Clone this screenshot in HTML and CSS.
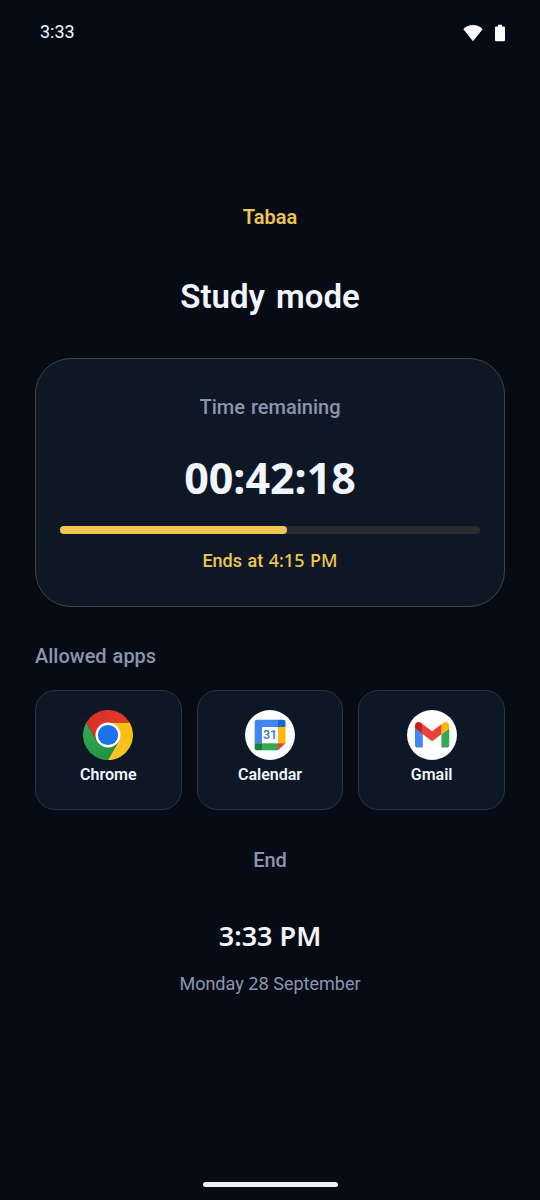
FILE: index.html
```html
<!DOCTYPE html>
<html lang="en">
<head>
<meta charset="utf-8">
<title>Tabaa</title>
<link rel="stylesheet" href="styles.css">
</head>
<body>
<div class="screen">
  <header class="status">
    <span class="clock">3:33</span>
    <div class="status-icons">
      <svg width="20" height="18" viewBox="0 0 20 18"><path fill="#fff" d="M.4 5.2C3 2.400 6.200 1 10 1s7 1.400 9.600 4.200L10 17.200z"/></svg>
      <svg width="10" height="18" viewBox="0 0 10 18"><path fill="#fff" d="M3 .8h4v1.700h1.800c.7 0 1.200.5 1.200 1.200v12.400c0 .7-.5 1.200-1.200 1.200H1.200C.5 17.300 0 16.800 0 16.100V3.700c0-.7.5-1.200 1.200-1.200H3z"/></svg>
    </div>
  </header>

  <main class="content">
    <div class="brand">Tabaa</div>
    <h1 class="title">Study mode</h1>

    <section class="timer-card">
      <div class="label timer-label">Time remaining</div>
      <div class="timer">00:42:18</div>
      <div class="track"><div class="fill"></div></div>
      <div class="ends">Ends at <span class="num">4:15 PM</span></div>
    </section>

    <h2 class="label apps-label">Allowed apps</h2>
    <section class="apps">
      <div class="app">
        <svg class="app-icon" viewBox="0 0 48 48">
          <defs>
            <linearGradient id="red" x1="0" x2="1"><stop offset="0" stop-color="#d93025"/><stop offset="1" stop-color="#e33b2e"/></linearGradient>
            <linearGradient id="green" x1="0" y1="0" x2="1" y2="1"><stop offset="0" stop-color="#34a853"/><stop offset="1" stop-color="#1e8e3e"/></linearGradient>
            <linearGradient id="yellow" x1="0" y1="1" x2="1" y2="0"><stop offset="0" stop-color="#fcc934"/><stop offset="1" stop-color="#fbbc04"/></linearGradient>
          </defs>
          <path fill="url(#green)" d="M3.200 12A24 24 0 0 0 24 48L34.400 30 24 24 13.600 30z"/>
          <path fill="url(#yellow)" d="M24 12H44.800A24 24 0 0 1 24 48L34.400 30z"/>
          <path fill="url(#red)" d="M3.200 12A24 24 0 0 1 44.800 12H24V24L13.600 30z"/>
          <circle cx="24" cy="24" r="12" fill="#fff"/>
          <circle cx="24" cy="24" r="9.700" fill="#1a73e8"/>
        </svg>
        <span class="app-name">Chrome</span>
      </div>
      <div class="app">
        <svg class="app-icon" viewBox="0 0 50 50">
          <circle cx="25" cy="25" r="25" fill="#fff"/>
          <path fill="#4285f4" d="M11.800 9.700H33V17H17V33.300H9.700V11.800q0-2.100 2.100-2.100z"/>
          <path fill="#1967d2" d="M33 9.700h5.400q2.100 0 2.100 2.100V17H33z"/>
          <path fill="#fbbc04" d="M33 17h7.500v16.300H33z"/>
          <path fill="#34a853" d="M17 33.300h16v7H17z"/>
          <path fill="#188038" d="M9.700 33.300H17v7h-5.200q-2.100 0-2.100-2.100z"/>
          <path fill="#ea4335" d="M33 33.300h7.500l-7.500 7z"/>
          <text x="25" y="29.300" text-anchor="middle" class="cal-day">31</text>
        </svg>
        <span class="app-name">Calendar</span>
      </div>
      <div class="app">
        <svg class="app-icon" viewBox="0 0 50 50">
          <circle cx="25" cy="25" r="25" fill="#fff"/>
          <g transform="translate(8 11.900) scale(.389) translate(-52 -42)">
            <path fill="#4285f4" d="M58 108h14V74L52 59v43c0 3.320 2.690 6 6 6"/>
            <path fill="#34a853" d="M120 108h14c3.320 0 6-2.690 6-6V59l-20 15"/>
            <path fill="#fbbc04" d="M120 48v26l20-15v-8c0-7.420-8.470-11.650-14.400-7.200"/>
            <path fill="#ea4335" d="M72 74V48l24 18 24-18v26L96 92"/>
            <path fill="#c5221f" d="M52 51v8l20 15V48l-5.600-4.200c-5.940-4.450-14.400-.22-14.400 7.200"/>
          </g>
        </svg>
        <span class="app-name">Gmail</span>
      </div>
    </section>

    <div class="label end-label">End</div>
    <div class="now">3:33 PM</div>
    <div class="date">Monday <span class="num">28</span> September</div>
  </main>
  <div class="home-bar"></div>
</div>
</body>
</html>
```
FILE: styles.css
```css
* { box-sizing: border-box; }
body { margin: 0; background: #060b16; }
.screen {
  width: 540px;
  height: 1200px;
  display: flex;
  flex-direction: column;
  background: #060b16;
  color: #f1f5fd;
  font-family: Roboto, "Noto Sans", sans-serif;
}
.status {
  height: 64px;
  padding: 0 35px 0 40px;
  display: flex;
  align-items: center;
  justify-content: space-between;
}
.clock { font-size: 18px; line-height: 24px; }
.status-icons { display: flex; gap: 12px; padding-top: 1px; }
.status-icons svg { display: block; }
.content {
  flex: 1;
  padding: 141px 35px 0;
  text-align: center;
}
.brand {
  font-size: 20px;
  line-height: 24px;
  font-weight: 600;
  color: #efc650;
}
.title {
  margin: 48px 0 0;
  font-size: 33px;
  line-height: 40px;
  font-weight: 600;
  word-spacing: 3px;
}
.label {
  margin: 0;
  font-size: 20px;
  line-height: 24px;
  font-weight: 500;
  color: #8b96ae;
  word-spacing: 1px;
}
.timer-card {
  margin-top: 41px;
  height: 249px;
  padding: 36px 24px 0;
  border: 1px solid #46443a;
  border-radius: 36px;
  background: #0e1726;
}
.timer {
  margin-top: 31px;
  font-family: "Noto Sans", sans-serif;
  font-size: 43px;
  line-height: 56px;
  font-weight: 700;
}
.track {
  margin-top: 20px;
  height: 8px;
  border-radius: 4px;
  background: #292b2c;
}
.fill {
  width: 54%;
  height: 8px;
  border-radius: 4px;
  background: #efc650;
}
.ends {
  margin-top: 15px;
  font-size: 18px;
  line-height: 24px;
  font-weight: 500;
  color: #efc650;
  word-spacing: 1px;
}
.num { font-family: "Noto Sans", sans-serif; line-height: 1; }
.apps-label { margin-top: 37px; text-align: left; }
.apps {
  margin-top: 22px;
  display: grid;
  grid-template-columns: repeat(3, 1fr);
  gap: 15px;
}
.app {
  height: 120px;
  padding-top: 19px;
  display: flex;
  flex-direction: column;
  align-items: center;
  border: 1px solid #2c3442;
  border-radius: 20px;
  background: #0e1726;
}
.app-icon { display: block; width: 50px; height: 50px; flex: none; }
.cal-day { font: 500 12.500px Roboto, sans-serif; fill: #3474dc; }
.app-name {
  margin-top: 5px;
  font-size: 16px;
  line-height: 20px;
  font-weight: 600;
}
.end-label { margin-top: 38px; }
.now {
  margin-top: 46px;
  font-family: "Noto Sans", sans-serif;
  font-size: 27px;
  line-height: 36px;
  font-weight: 600;
}
.date {
  margin-top: 18px;
  font-size: 18px;
  line-height: 24px;
  color: #8b96ae;
}
.home-bar {
  width: 135px;
  height: 5px;
  margin: 0 auto 13px;
  border-radius: 3px;
  background: #f2f2f2;
}
```
